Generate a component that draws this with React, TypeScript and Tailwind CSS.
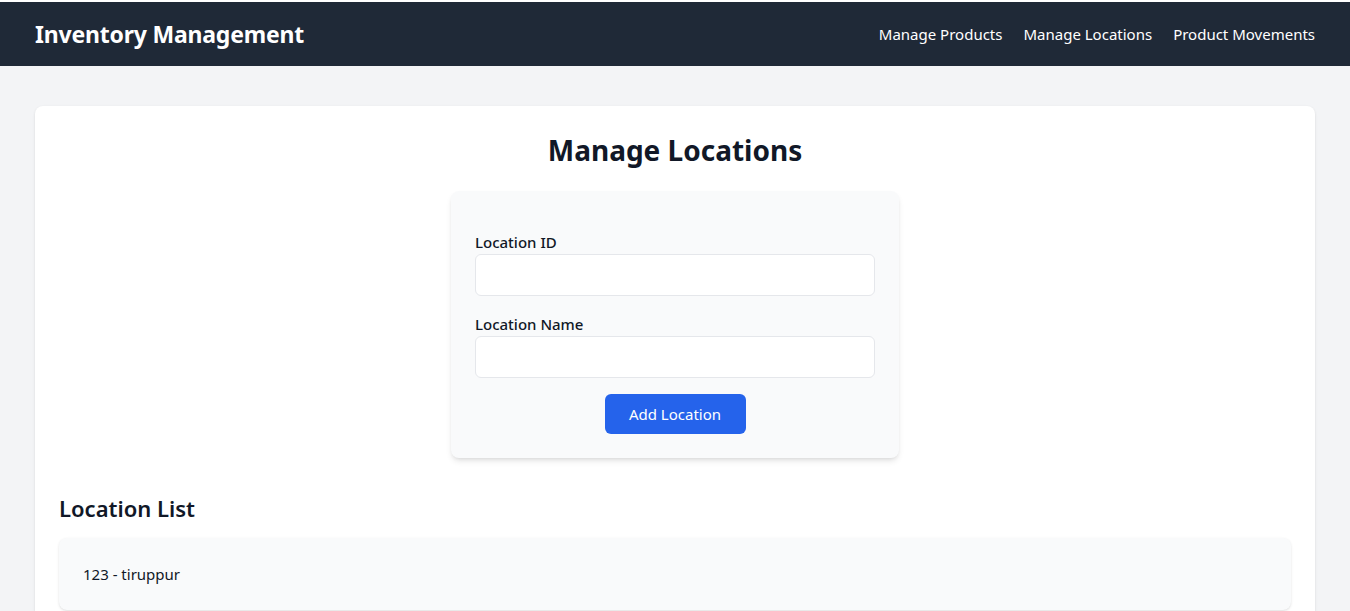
import React from "react";

export default function App() {
  const font = { fontFamily: '"Noto Sans", "Open Sans", sans-serif' };
  return (
    <div className="min-h-screen bg-[#f3f4f6]" style={font}>
      <nav className="bg-[#1f2937] text-white mt-[2px]">
        <div className="max-w-7xl mx-auto flex items-center justify-between py-4">
          <h1 className="text-[23px] font-bold leading-8 tracking-[-0.2px]">Inventory Management</h1>
          <div className="flex gap-[21px] text-[15px]">
            <a className="text-white">Manage Products</a>
            <a className="text-white">Manage Locations</a>
            <a className="text-white">Product Movements</a>
          </div>
        </div>
      </nav>
      <main className="max-w-7xl mx-auto pt-10">
        <div className="bg-white rounded-lg shadow p-6">
          <h2 className="text-[28px] font-bold text-[#111827] text-center mb-[21px] leading-10">Manage Locations</h2>
          <div className="max-w-md mx-auto bg-[#f9fafb] rounded-lg shadow-md px-6 pt-[39px] pb-6">
            <div className="space-y-4">
              <div>
                <label className="block text-[15px] font-medium text-[#111827] leading-6">Location ID</label>
                <input className="w-full h-[42px] rounded-md border border-[#e5e7eb] bg-white px-3" />
              </div>
              <div>
                <label className="block text-[15px] font-medium text-[#111827] leading-6">Location Name</label>
                <input className="w-full h-[42px] rounded-md border border-[#e5e7eb] bg-white px-3" />
              </div>
              <div className="flex justify-center">
                <button className="bg-[#2563eb] text-white rounded-md px-6 py-2 text-[15px] leading-6 w-[141px]">Add Location</button>
              </div>
            </div>
          </div>
          <h3 className="text-[22px] font-semibold text-[#111827] mt-8 mb-3 leading-9">Location List</h3>
          <div className="bg-[#f9fafb] rounded-lg shadow-sm p-6">
            <p className="text-[15px] text-[#111827] leading-6">123 - tiruppur</p>
          </div>
        </div>
      </main>
    </div>
  );
}
